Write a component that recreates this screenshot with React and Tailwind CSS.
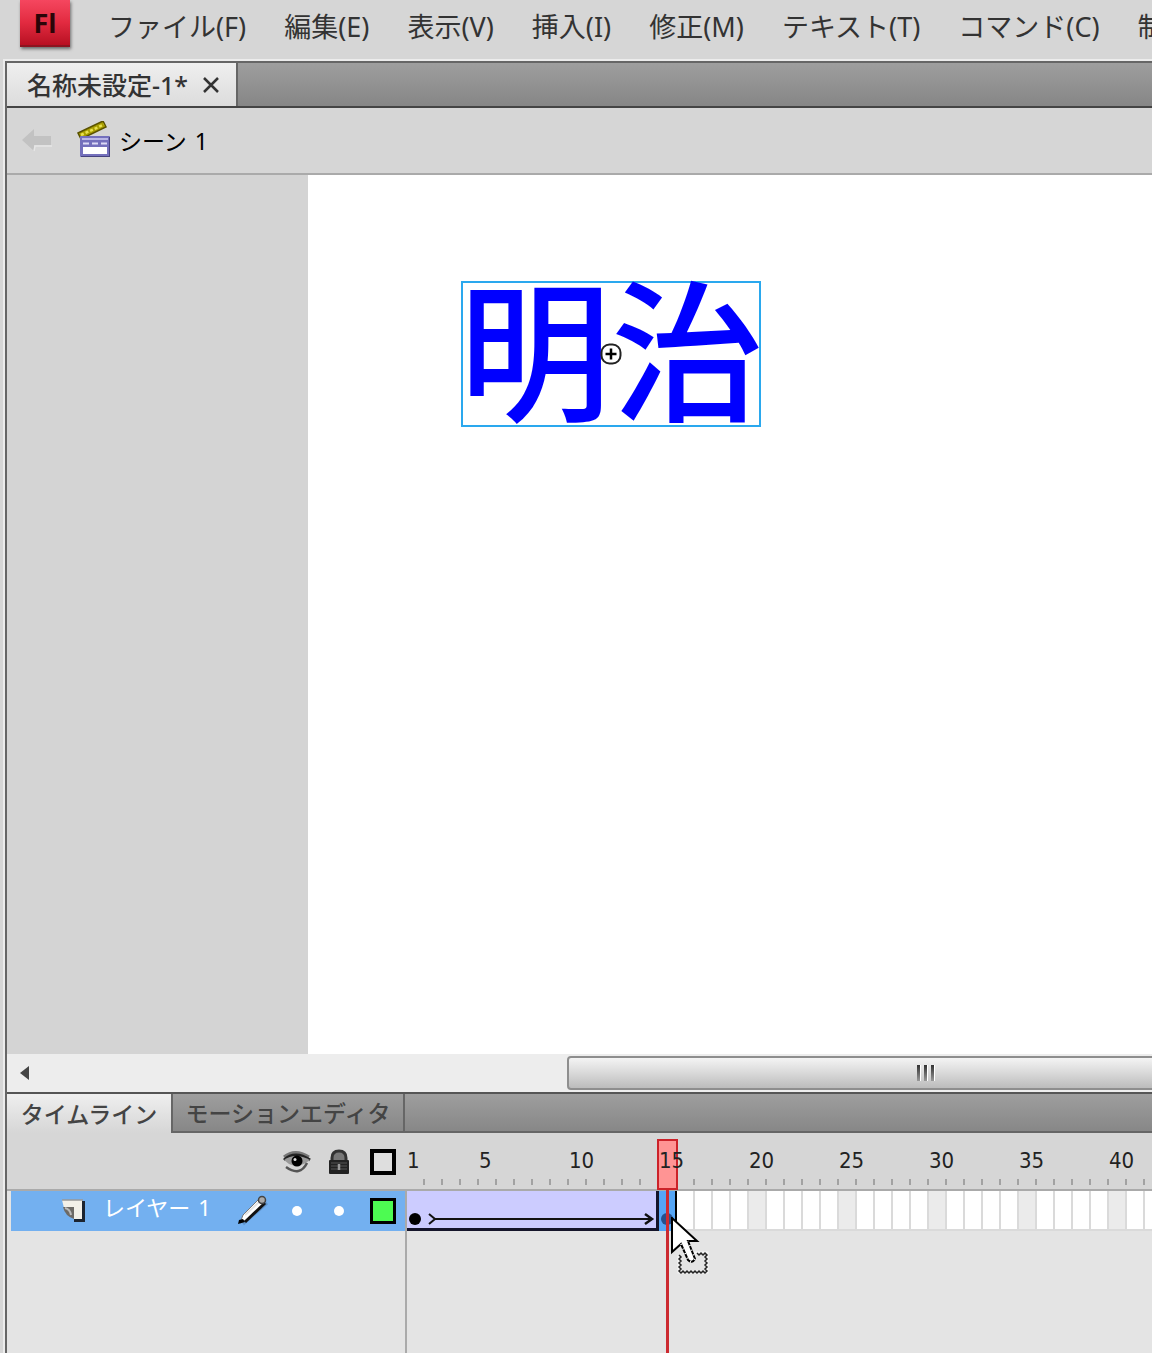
import { useState } from 'react';

const MENUS = [
  'ファイル(F)',
  '編集(E)',
  '表示(V)',
  '挿入(I)',
  '修正(M)',
  'テキスト(T)',
  'コマンド(C)',
  '制御(O)',
];

const FRAMES = Array.from({ length: 120 }, (_, i) => i + 1);
const KEYFRAME = 15;

const FlashLogo = () => (
  <div className="w-[50px] h-[47px] shrink-0 flex items-center justify-center bg-gradient-to-b from-[#f5465f] via-[#e22a40] to-[#b80f22] border-b-2 border-[#8c1420] shadow-[1px_2px_3px_rgba(0,0,0,0.5)]">
    <span className="font-['Open_Sans',sans-serif] font-bold text-[27px] leading-none text-[#2a0508]">
      Fl
    </span>
  </div>
);

const BackIcon = () => (
  <svg width="32" height="26" viewBox="0 0 32 26">
    <path d="M1 12 L13 1 V8 H30 V17 H13 V23 Z" fill="#c2c2c2" />
    <path d="M13 23 L14 18 H31" fill="none" stroke="#e6e6e6" strokeWidth="1.5" />
  </svg>
);

const SceneIcon = () => (
  <svg width="34" height="40" viewBox="0 0 34 40">
    <path d="M1 12 L26 0 L29 6 L4 18 Z" fill="#a89e00" stroke="#5a5200" strokeWidth="1.5" />
    <path d="M4 14 L27 3.500" stroke="#e8e050" strokeWidth="2.500" strokeDasharray="3 2" />
    <rect x="3" y="15" width="30" height="21" rx="1" fill="#7470bc" />
    <path d="M4 35.500 H33 M32.500 16 V35" stroke="#45427e" strokeWidth="1" />
    <path d="M5 18 H31" stroke="#b9b6e6" strokeWidth="2" />
    <path d="M6 22.500 H31" stroke="#dcdaf5" strokeWidth="2" strokeDasharray="6 3" />
    <rect x="6" y="26" width="24" height="7" fill="#fff" />
  </svg>
);

const EyeIcon = () => (
  <svg width="28" height="24" viewBox="0 0 28 24">
    <path d="M1 7 Q12 -2 26 7" fill="none" stroke="#777" strokeWidth="3" />
    <path d="M1 10 Q12 0 27 10" fill="none" stroke="#222" strokeWidth="3" />
    <path d="M1 10 Q12 2 27 10 Q16 19 6 14 Z" fill="#999" />
    <circle cx="14" cy="11" r="5.500" fill="#000" />
    <circle cx="12" cy="9.500" r="1.500" fill="#ddd" />
    <path d="M3 17 Q17 27 24 13" fill="none" stroke="#555" strokeWidth="2.500" />
  </svg>
);

const LockIcon = () => (
  <svg width="24" height="26" viewBox="0 0 24 26">
    <path d="M5 13 V9 Q5 2 12 2 Q19 2 19 9 V13" fill="#777" stroke="#333" strokeWidth="3" />
    <rect x="2" y="11" width="20" height="14" rx="1" fill="#222" />
    <path d="M4 14 H20 M4 17 H20 M4 20 H20" stroke="#555" strokeWidth="1" />
    <path d="M12 15 V21" stroke="#999" strokeWidth="2.500" />
  </svg>
);

const LayerIcon = () => (
  <svg width="26" height="26" viewBox="0 0 26 26">
    <path d="M22.500 3 V22.500 H13" fill="none" stroke="#1c2430" strokeWidth="3" />
    <path d="M1 2 H21 V21 H13 L3 10 Z" fill="#f3f0e8" />
    <path d="M1 2 H22" stroke="#999" strokeWidth="1.500" />
    <path d="M2 9 H13 V21 Q4 18 2 9 Z" fill="#6d6a66" />
    <path d="M4 10 Q9 11 10 17" fill="none" stroke="#bbb" strokeWidth="2" />
  </svg>
);

const PencilIcon = () => (
  <svg width="32" height="32" viewBox="0 0 32 32">
    <path d="M6 29 L30 8" stroke="#4d78a8" strokeWidth="3" opacity="0.500" />
    <path d="M3 28 L6 20 L22 4 L28 8 L12 24 Z" fill="#fff" stroke="#777" strokeWidth="1" />
    <path d="M8 27 L28 8" stroke="#111" strokeWidth="3" />
    <path d="M8 20 L22 7" stroke="#e5e5e5" strokeWidth="2" />
    <circle cx="25" cy="5" r="3.500" fill="#aaa" stroke="#444" strokeWidth="1.500" />
    <path d="M1 29 L2 25 L6 24 L8 27 Z" fill="#000" />
  </svg>
);

const CursorIcon = () => (
  <svg width="40" height="60" viewBox="0 0 40 60">
    <path d="M12 36 H36 V55 H8 V38" fill="none" stroke="#f4f4f4" strokeWidth="3" />
    <path
      d="M26 36 l2 2 l2 -2 l2 2 l2 -2 l2 2 l-2 2 l2 2 l-2 2 l2 2 l-2 2 l2 2 l-2 2 l2 2 l-2 2 l-2 -2 l-2 2 l-2 -2 l-2 2 l-2 -2 l-2 2 l-2 -2 l-2 2 l-2 -2 l-2 2 l-2 -2 l-2 2 l-2 -2 l2 -2 l-2 -2 l2 -2 l-2 -2 l2 -2 l-2 -2 l2 -2 l-2 -2"
      fill="none"
      stroke="#222"
      strokeWidth="1.500"
    />
    <path
      d="M1 1 V35 L10 27 L17 43 Q21 47 24 42 L17 24 H26 Z"
      fill="#fff"
      stroke="#000"
      strokeWidth="2"
    />
    <path d="M10 27 L17 43 Q21 47 24 42 L17 24" fill="none" stroke="#fff" strokeWidth="2" strokeDasharray="1 4" />
  </svg>
);

const MenuBar = () => (
  <header className="h-[59px] shrink-0 flex items-start pl-5 overflow-hidden">
    <FlashLogo />
    <nav className="flex gap-[38px] pl-[38px] pt-[9px]">
      {MENUS.map((menu) => (
        <button key={menu} className="shrink-0 whitespace-nowrap text-[27px] leading-9 text-[#333]">
          {menu}
        </button>
      ))}
    </nav>
  </header>
);

const DocumentTabs = () => (
  <div className="h-[45px] shrink-0 flex border-b-2 border-[#444] bg-gradient-to-b from-[#9e9e9e] to-[#868686]">
    <div className="flex items-center gap-[14px] pl-5 pr-4 border-r-2 border-[#666] bg-gradient-to-b from-[#efefef] to-[#dcdcdc]">
      <span className="text-[25px] leading-8 font-medium text-[#333] whitespace-nowrap">名称未設定-1*</span>
      <button aria-label="閉じる">
        <svg width="18" height="18" viewBox="0 0 18 18">
          <path d="M2 2 L16 16 M16 2 L2 16" stroke="#333" strokeWidth="2.500" />
        </svg>
      </button>
    </div>
  </div>
);

const EditBar = () => (
  <div className="h-[67px] shrink-0 flex items-center pl-[14px] border-b-2 border-[#aaa] bg-[#d6d6d6]">
    <button aria-label="戻る">
      <BackIcon />
    </button>
    <button className="flex items-center gap-2 pl-6 text-[23px] leading-8 text-black">
      <SceneIcon />
      <span className="flex gap-2">
        <span>シーン</span>
        <span>1</span>
      </span>
    </button>
  </div>
);

const Stage = () => (
  <main className="flex-1 min-h-0 flex bg-[#d4d4d4] pl-[301px]">
    <div className="relative flex-1 bg-white overflow-hidden">
      <div className="absolute left-[153px] top-[106px] w-[300px] h-[146px] flex items-center justify-center border-2 border-[#2aa8ee]">
        <span className="whitespace-nowrap text-[152px] leading-[140px] pb-1 font-medium text-[#0000ff]">明治</span>
        <svg className="absolute left-[137px] top-[60px]" width="22" height="22" viewBox="0 0 22 22">
          <rect x="1.500" y="1.500" width="19" height="19" rx="8" fill="#fff" stroke="#222" strokeWidth="2" />
          <path d="M11 5.500 V16.500 M5.500 11 H16.500" stroke="#000" strokeWidth="2.500" />
        </svg>
      </div>
    </div>
  </main>
);

const GripBar = () => <span className="w-[4px] h-4 bg-gradient-to-b from-[#333] to-[#999] border-r border-white" />;

const HorizontalScroll = () => (
  <div className="h-[38px] shrink-0 flex items-center bg-[#ededed]">
    <button aria-label="左へスクロール" className="w-9 h-full flex items-center justify-center">
      <svg width="10" height="16" viewBox="0 0 10 16">
        <path d="M9 1 V15 L0 8 Z" fill="#444" />
      </svg>
    </button>
    <div className="flex-1 h-[34px] flex overflow-hidden">
      <div className="flex-1 ml-[524px] -mr-[133px] flex items-center justify-center gap-[3px] rounded-sm border-2 border-[#8e8e8e] bg-gradient-to-b from-[#f4f4f4] via-[#d9d9d9] to-[#bcbcbc]">
        <GripBar />
        <GripBar />
        <GripBar />
      </div>
    </div>
  </div>
);

const LayerPane = () => (
  <section className="w-[400px] shrink-0 flex flex-col bg-[#e4e4e4]">
    <div className="h-[58px] shrink-0 flex items-center justify-end pt-[2px] pr-[2px] border-b-2 border-[#aaa] bg-[#d6d6d6]">
      <button aria-label="表示" className="w-[42px] flex justify-center">
        <EyeIcon />
      </button>
      <button aria-label="ロック" className="w-[42px] flex justify-center">
        <LockIcon />
      </button>
      <button aria-label="アウトライン" className="w-[45px] flex justify-center">
        <span className="w-[26px] h-[26px] border-4 border-black bg-[#dedede]" />
      </button>
    </div>
    <div className="flex-1 border-r-2 border-[#aaa]">
      <div className="h-10 ml-1 flex items-center bg-[#73b0f0]">
        <div className="pl-[50px] flex-1 flex items-center gap-4">
          <LayerIcon />
          <span className="flex gap-2 pb-2 text-[22px] leading-8 text-white whitespace-nowrap">
            <span>レイヤー</span>
            <span>1</span>
          </span>
        </div>
        <div className="w-[46px] flex justify-center">
          <PencilIcon />
        </div>
        <button aria-label="レイヤーを表示" className="w-[42px] flex justify-center">
          <span className="w-[10px] h-[10px] rounded-full bg-white" />
        </button>
        <button aria-label="レイヤーをロック" className="w-[42px] flex justify-center">
          <span className="w-[10px] h-[10px] rounded-full bg-white" />
        </button>
        <button aria-label="レイヤーのアウトライン" className="w-[45px] flex justify-center">
          <span className="w-[26px] h-[26px] border-[3px] border-black bg-[#4dfb52]" />
        </button>
      </div>
    </div>
  </section>
);

const Ruler = () => (
  <div className="h-[58px] shrink-0 flex border-b-2 border-[#aaa] bg-[#d6d6d6]">
    {FRAMES.map((frame) => (
      <div key={frame} className="w-[18px] shrink-0 flex flex-col justify-between pt-3 pb-1">
        {frame === 1 || frame % 5 === 0 ? (
          <span className="relative z-10 w-0 whitespace-nowrap font-['DejaVu_Sans_Condensed','Noto_Sans',sans-serif] text-[22px] leading-8 text-[#222]">
            {frame}
          </span>
        ) : (
          <span className="h-8" />
        )}
        <span className="w-[2px] h-[6px] self-end bg-[#a2a2a2]" />
      </div>
    ))}
  </div>
);

const FrameRow = () => (
  <div className="h-10 shrink-0 flex">
    <div className="w-[252px] shrink-0 border-r-[3px] border-b-[3px] border-[#15152a] bg-[#ccccff]">
      <svg width="249" height="37" viewBox="0 0 249 37">
        <circle cx="8" cy="28" r="6" fill="#000" />
        <path d="M22 23 L28 28 L22 33" fill="none" stroke="#111" strokeWidth="2" />
        <path d="M27 28 H243" stroke="#111" strokeWidth="2" />
        <path d="M238 23 L245 28 L238 33" fill="none" stroke="#111" strokeWidth="2.500" />
      </svg>
    </div>
    <div className="w-[18px] shrink-0 border-r-2 border-black bg-[#55a5f5]">
      <svg width="16" height="40" viewBox="0 0 16 40">
        <circle cx="8" cy="28" r="6" fill="#27508c" />
      </svg>
    </div>
    {FRAMES.slice(KEYFRAME).map((frame) => (
      <div
        key={frame}
        className={`w-[18px] shrink-0 border-r-2 border-b-2 border-[#dadada] ${
          frame % 5 === 0 ? 'bg-[#ebebeb]' : 'bg-white'
        }`}
      />
    ))}
  </div>
);

const Timeline = () => {
  const [tab, setTab] = useState('timeline');

  return (
    <section className="h-[261px] shrink-0 flex flex-col border-t-2 border-[#555]">
      <div role="tablist" className="h-[39px] shrink-0 flex bg-gradient-to-b from-[#9e9e9e] to-[#868686]">
        <button
          role="tab"
          aria-selected={tab === 'timeline'}
          onClick={() => setTab('timeline')}
          className="w-[164px] shrink-0 text-[23px] leading-8 font-medium text-[#444] whitespace-nowrap bg-gradient-to-b from-[#efefef] to-[#d6d6d6]"
        >
          タイムライン
        </button>
        <button
          role="tab"
          aria-selected={tab === 'motion'}
          onClick={() => setTab('motion')}
          className="w-[234px] shrink-0 text-[23px] leading-8 font-medium text-[#444] whitespace-nowrap border-l-2 border-r-2 border-b-2 border-[#666]"
        >
          モーションエディタ
        </button>
        <div className="flex-1 border-b-2 border-[#666]" />
      </div>
      <div className="flex-1 min-h-0 flex">
        <LayerPane />
        <div className="relative flex-1 min-w-0 flex flex-col overflow-hidden bg-[#e4e4e4]">
          <Ruler />
          <FrameRow />
          {/* playhead over frame 15 */}
          <div className="absolute left-[250px] top-[6px] bottom-0 w-[21px] flex flex-col items-center">
            <div className="w-full h-[51px] shrink-0 border-2 border-[#cc2229] bg-[#ff9494]" />
            <div className="flex-1 w-[3px] bg-[#cc2a30]" />
          </div>
          <div className="absolute left-[264px] top-[84px]">
            <CursorIcon />
          </div>
        </div>
      </div>
    </section>
  );
};

const App = () => {
  return (
    <div
      lang="ja"
      className="h-screen flex flex-col overflow-hidden bg-[#d6d6d6] font-['Noto_Sans','Noto_Sans_CJK_JP',sans-serif]"
    >
      <MenuBar />
      <div className="flex-1 min-h-0 flex flex-col ml-[3px] border-t-2 border-l-2 border-[#ececec]">
        <div className="flex-1 min-h-0 flex flex-col border-t-2 border-l-2 border-[#666]">
          <DocumentTabs />
          <EditBar />
          <Stage />
          <HorizontalScroll />
          <Timeline />
        </div>
      </div>
    </div>
  );
};

export default App;
